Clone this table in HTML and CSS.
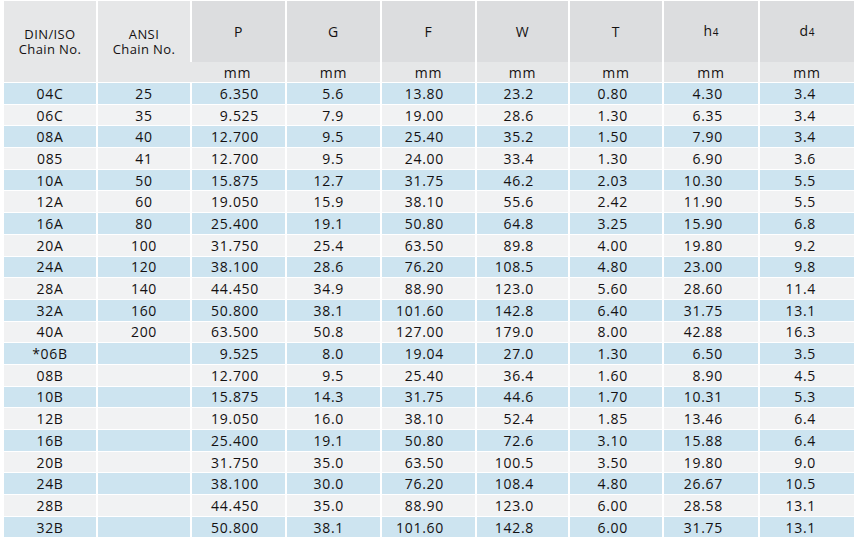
FILE: index.html
```html
<!DOCTYPE html>
<html>
<head>
<meta charset="utf-8">
<link rel="stylesheet" href="styles.css">
</head>
<body>
<div class="wrap">
<table class="spec">
<colgroup>
<col class="c1"><col class="c2"><col class="c3"><col class="c4"><col class="c5"><col class="c6"><col class="c7"><col class="c8"><col class="c9">
</colgroup>
<thead>
<tr class="h1">
<th rowspan="2" class="lh"><span class="ln">DIN/ISO</span><span class="ln">Chain No.</span></th>
<th rowspan="2" class="lh"><span class="ln">ANSI</span><span class="ln">Chain No.</span></th>
<th>P</th><th>G</th><th>F</th><th>W</th><th>T</th><th>h<small>4</small></th><th>d<small>4</small></th>
</tr>
<tr class="h2">
<th>mm</th><th>mm</th><th>mm</th><th>mm</th><th>mm</th><th>mm</th><th>mm</th>
</tr>
</thead>
<tbody>
<tr><td>04C</td><td>25</td><td>6.350</td><td>5.6</td><td>13.80</td><td>23.2</td><td>0.80</td><td>4.30</td><td>3.4</td></tr>
<tr><td>06C</td><td>35</td><td>9.525</td><td>7.9</td><td>19.00</td><td>28.6</td><td>1.30</td><td>6.35</td><td>3.4</td></tr>
<tr><td>08A</td><td>40</td><td>12.700</td><td>9.5</td><td>25.40</td><td>35.2</td><td>1.50</td><td>7.90</td><td>3.4</td></tr>
<tr><td>085</td><td>41</td><td>12.700</td><td>9.5</td><td>24.00</td><td>33.4</td><td>1.30</td><td>6.90</td><td>3.6</td></tr>
<tr><td>10A</td><td>50</td><td>15.875</td><td>12.7</td><td>31.75</td><td>46.2</td><td>2.03</td><td>10.30</td><td>5.5</td></tr>
<tr><td>12A</td><td>60</td><td>19.050</td><td>15.9</td><td>38.10</td><td>55.6</td><td>2.42</td><td>11.90</td><td>5.5</td></tr>
<tr><td>16A</td><td>80</td><td>25.400</td><td>19.1</td><td>50.80</td><td>64.8</td><td>3.25</td><td>15.90</td><td>6.8</td></tr>
<tr><td>20A</td><td>100</td><td>31.750</td><td>25.4</td><td>63.50</td><td>89.8</td><td>4.00</td><td>19.80</td><td>9.2</td></tr>
<tr><td>24A</td><td>120</td><td>38.100</td><td>28.6</td><td>76.20</td><td>108.5</td><td>4.80</td><td>23.00</td><td>9.8</td></tr>
<tr><td>28A</td><td>140</td><td>44.450</td><td>34.9</td><td>88.90</td><td>123.0</td><td>5.60</td><td>28.60</td><td>11.4</td></tr>
<tr><td>32A</td><td>160</td><td>50.800</td><td>38.1</td><td>101.60</td><td>142.8</td><td>6.40</td><td>31.75</td><td>13.1</td></tr>
<tr><td>40A</td><td>200</td><td>63.500</td><td>50.8</td><td>127.00</td><td>179.0</td><td>8.00</td><td>42.88</td><td>16.3</td></tr>
<tr><td>*06B</td><td></td><td>9.525</td><td>8.0</td><td>19.04</td><td>27.0</td><td>1.30</td><td>6.50</td><td>3.5</td></tr>
<tr><td>08B</td><td></td><td>12.700</td><td>9.5</td><td>25.40</td><td>36.4</td><td>1.60</td><td>8.90</td><td>4.5</td></tr>
<tr><td>10B</td><td></td><td>15.875</td><td>14.3</td><td>31.75</td><td>44.6</td><td>1.70</td><td>10.31</td><td>5.3</td></tr>
<tr><td>12B</td><td></td><td>19.050</td><td>16.0</td><td>38.10</td><td>52.4</td><td>1.85</td><td>13.46</td><td>6.4</td></tr>
<tr><td>16B</td><td></td><td>25.400</td><td>19.1</td><td>50.80</td><td>72.6</td><td>3.10</td><td>15.88</td><td>6.4</td></tr>
<tr><td>20B</td><td></td><td>31.750</td><td>35.0</td><td>63.50</td><td>100.5</td><td>3.50</td><td>19.80</td><td>9.0</td></tr>
<tr><td>24B</td><td></td><td>38.100</td><td>30.0</td><td>76.20</td><td>108.4</td><td>4.80</td><td>26.67</td><td>10.5</td></tr>
<tr><td>28B</td><td></td><td>44.450</td><td>35.0</td><td>88.90</td><td>123.0</td><td>6.00</td><td>28.58</td><td>13.1</td></tr>
<tr><td>32B</td><td></td><td>50.800</td><td>38.1</td><td>101.60</td><td>142.8</td><td>6.00</td><td>31.75</td><td>13.1</td></tr>
</tbody>
</table>
</div>
</body>
</html>
```

FILE: styles.css
```css
html, body {
  margin: 0;
  padding: 0;
  background: #ffffff;
}
.wrap {
  padding: 1px 0 0 4px;
}
.spec {
  border-collapse: separate;
  border-spacing: 0;
  table-layout: fixed;
  width: 850px;
  font-family: "Open Sans", "Noto Sans", sans-serif;
  font-size: 14px;
  letter-spacing: 0.7px;
  color: #141112;
}
.c1 { width: 92px; }
.c2 { width: 94px; }
.c3 { width: 95px; }
.c4 { width: 95px; }
.c5 { width: 95px; }
.c6 { width: 93px; }
.c7 { width: 94px; }
.c8 { width: 96px; }
.c9 { width: 96px; }

.spec th {
  font-weight: normal;
  text-align: center;
  vertical-align: middle;
  padding: 0;
  border-left: 2px solid #ffffff;
  line-height: 17px;
}
.spec th:first-child { border-left: 0; }
.spec th small { font-size: 10px; letter-spacing: 0; }
.h1 th {
  height: 61px;
  background: #dcdddf;
  font-size: 14px;
}
.h1 th.lh {
  background: #e6e7e8;
  border-bottom: 1px solid #ffffff;
  font-size: 13px;
  letter-spacing: 0.4px;
  line-height: 15px;
}
.ln {
  display: block;
}
.h2 th {
  height: 20px;
  background: #e6e7e8;
  border-bottom: 1px solid #ffffff;
  border-left: 2px solid #ffffff;
}
.spec td {
  height: 20.7px;
  padding: 0;
  border-bottom: 1px solid #ffffff;
  border-left: 2px solid #ffffff;
  text-align: right;
  vertical-align: middle;
  line-height: 17px;
  white-space: nowrap;
}
.spec td:first-child { border-left: 0; text-align: center; }
.spec td:nth-child(2) { text-align: center; }
.spec td:nth-child(3) { padding-right: 26px; }
.spec td:nth-child(4) { padding-right: 36px; }
.spec td:nth-child(5) { padding-right: 31px; }
.spec td:nth-child(6) { padding-right: 34px; }
.spec td:nth-child(7) { padding-right: 34px; }
.spec td:nth-child(8) { padding-right: 35px; }
.spec td:nth-child(9) { padding-right: 38px; }
.spec tbody tr:nth-child(odd) td { background: #cde4f0; }
.spec tbody tr:nth-child(even) td { background: #f1f2f3; }
```
